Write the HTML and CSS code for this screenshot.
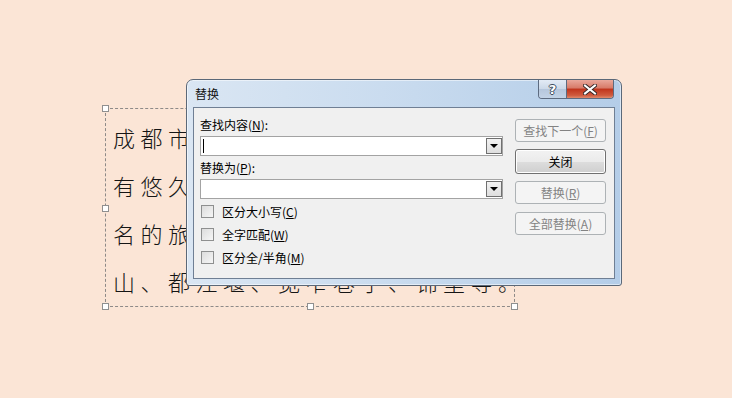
FILE: index.html
```html
<!DOCTYPE html>
<html lang="zh-CN">
<head>
    <meta charset="UTF-8">
    <title>替换</title>
    <link rel="stylesheet" href="styles.css">
</head>
<body>
    <div class="slide">
        <div class="textbox">
            <p class="line">成都市是四川省的省会，是一座具</p>
            <p class="line">有悠久历史的国家文化名城，也是著</p>
            <p class="line">名的旅游城市，其著名景点有青城</p>
            <p class="line">山、都江堰、宽窄巷子、锦里等。</p>

            <span class="handle h-tl"></span>
            <span class="handle h-tm"></span>
            <span class="handle h-tr"></span>
            <span class="handle h-ml"></span>
            <span class="handle h-mr"></span>
            <span class="handle h-bl"></span>
            <span class="handle h-bm"></span>
            <span class="handle h-br"></span>
        </div>
    </div>

    <div class="dialog">
        <div class="titlebar">
            <span class="title">替换</span>
            <div class="caption-buttons">
                <span class="cap-btn help">?</span>
                <span class="cap-btn close">
                    <svg width="14" height="11" viewBox="0 0 14 11">
                        <path d="M2 1.5 L12 9.5 M12 1.5 L2 9.5" stroke="#3a2a2a" stroke-width="4" stroke-linecap="square"/>
                        <path d="M2 1.5 L12 9.5 M12 1.5 L2 9.5" stroke="#fff" stroke-width="2" stroke-linecap="square"/>
                    </svg>
                </span>
            </div>
        </div>

        <div class="client">
            <div class="fields">
                <label class="field-label">查找内容(<u>N</u>):</label>
                <div class="combo">
                    <span class="caret"></span>
                    <span class="drop"><i class="tri"></i></span>
                </div>

                <label class="field-label">替换为(<u>P</u>):</label>
                <div class="combo">
                    <span class="drop"><i class="tri"></i></span>
                </div>

                <div class="checks">
                    <div class="check"><span class="box"></span><span>区分大小写(<u>C</u>)</span></div>
                    <div class="check"><span class="box"></span><span>全字匹配(<u>W</u>)</span></div>
                    <div class="check"><span class="box"></span><span>区分全/半角(<u>M</u>)</span></div>
                </div>
            </div>

            <div class="buttons">
                <button class="btn" disabled>查找下一个(<u>F</u>)</button>
                <button class="btn default">关闭</button>
                <button class="btn" disabled>替换(<u>R</u>)</button>
                <button class="btn" disabled>全部替换(<u>A</u>)</button>
            </div>
        </div>
    </div>
</body>
</html>
```

FILE: styles.css
```css
body {
    margin: 0;
    background: #fbe5d6;
    font-family: "Noto Sans CJK SC", "DejaVu Sans", sans-serif;
}

.slide {
    width: 732px;
    height: 398px;
    padding: 108px 0 0 105px;
    box-sizing: border-box;
}

.textbox {
    position: relative;
    width: 410px;
    height: 199px;
    border: 1px dashed #8e8a88;
    padding: 4px 0 0 7px;
    box-sizing: border-box;
    color: #151515;
    font-family: "Noto Sans CJK SC", sans-serif;
    font-weight: 300;
    font-size: 22px;
    letter-spacing: 5.5px;
}

.line {
    margin: 0;
    line-height: 48px;
    white-space: nowrap;
}

.handle {
    position: absolute;
    width: 5px;
    height: 5px;
    background: #fff;
    border: 1px solid #8f8f8f;
}

.h-tl { left: -4px; top: -4px; }
.h-tm { left: 201px; top: -4px; }
.h-tr { right: -4px; top: -4px; }
.h-ml { left: -4px; top: 96px; }
.h-mr { right: -4px; top: 96px; }
.h-bl { left: -4px; bottom: -4px; }
.h-bm { left: 201px; bottom: -4px; }
.h-br { right: -4px; bottom: -4px; }

/* dialog window */
.dialog {
    position: absolute;
    left: 186px;
    top: 79px;
    width: 436px;
    height: 207px;
    box-sizing: border-box;
    border: 1px solid #5b6878;
    border-radius: 7px 7px 3px 3px;
    background: linear-gradient(to right, #dae6f3 0%, #cadcef 45%, #b4cde8 100%);
    padding: 0 6px 6px 6px;
    display: flex;
    flex-direction: column;
    font-size: 12px;
    color: #000;
    box-shadow: 0 0 0 1px rgba(255, 255, 255, 0.5) inset;
}

.titlebar {
    position: relative;
    height: 27px;
    flex: none;
}

.title {
    position: absolute;
    left: 2px;
    top: 5px;
    font-size: 12px;
    color: #111;
}

.caption-buttons {
    position: absolute;
    right: 1px;
    top: 0;
    display: flex;
    border: 1px solid #5d6b80;
    border-top: none;
    border-radius: 0 0 4px 4px;
    overflow: hidden;
}

.cap-btn {
    height: 18px;
    display: flex;
    align-items: center;
    justify-content: center;
}

.help {
    width: 27px;
    border-right: 1px solid #5d6b80;
    background: linear-gradient(#e3ebf5, #cbd8e8 50%, #b5c6dc 51%, #c3d3e6);
    color: #fff;
    font-weight: bold;
    font-size: 13px;
    font-family: "DejaVu Sans", sans-serif;
    text-shadow: 1px 0 #3c4a5c, -1px 0 #3c4a5c, 0 1px #3c4a5c, 0 -1px #3c4a5c;
}

.close {
    width: 46px;
    background: linear-gradient(#e9a89b, #d77a68 45%, #c0341c 50%, #cf5a3e 85%, #e08a6c);
}

.client {
    flex: 1;
    background: #f0f0f0;
    border: 1px solid #6f7f94;
    display: flex;
    justify-content: space-between;
    padding: 8px 8px 0 6px;
}

.fields {
    width: 303px;
    display: flex;
    flex-direction: column;
}

.field-label {
    height: 18px;
    line-height: 18px;
}

.combo {
    position: relative;
    height: 20px;
    box-sizing: border-box;
    border: 1px solid #a3a3a3;
    background: #fff;
    margin: 2px 0 3px;
}

.combo + .field-label {
    margin-top: 0;
}

.field-label + .combo {
    margin-top: 2px;
}

.caret {
    position: absolute;
    left: 2px;
    top: 2px;
    width: 1px;
    height: 14px;
    background: #000;
}

.drop {
    position: absolute;
    right: 0;
    top: 1px;
    width: 16px;
    height: 16px;
    box-sizing: border-box;
    border: 1px solid #707070;
    background: linear-gradient(#f2f2f2, #dedede);
    display: flex;
    align-items: center;
    justify-content: center;
}

.tri {
    width: 0;
    height: 0;
    border-left: 4px solid transparent;
    border-right: 4px solid transparent;
    border-top: 4px solid #000;
}

.checks {
    margin-top: 1px;
    display: flex;
    flex-direction: column;
    gap: 7px;
}

.check {
    height: 16px;
    display: flex;
    align-items: center;
    gap: 8px;
    padding-left: 1px;
}

.box {
    width: 11px;
    height: 11px;
    border: 1px solid #8e8f8f;
    background: linear-gradient(135deg, #dcdcdc, #f6f6f6);
}

.buttons {
    display: flex;
    flex-direction: column;
    gap: 8px;
    padding-top: 3px;
}

.btn {
    width: 91px;
    height: 23px;
    padding: 0;
    font-family: inherit;
    font-size: 12px;
    border: 1px solid #adb2b5;
    border-radius: 3px;
    background: #f4f4f4;
    color: #838383;
}

.btn.default {
    height: 25px;
    margin-top: -1px;
    margin-bottom: -1px;
    color: #000;
    border-color: #707070;
    background: linear-gradient(#f2f2f2 0%, #ebebeb 50%, #dddddd 51%, #cfcfcf 100%);
    box-shadow: 0 0 0 1px #fff inset;
}
```
